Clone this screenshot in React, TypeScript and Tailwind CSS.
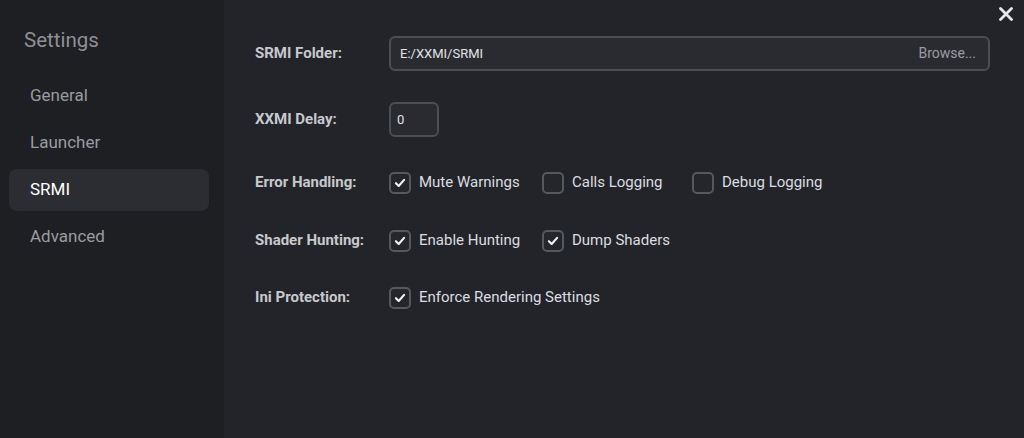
import React from 'react';

// ------------------------------------------------------------------
// Settings window — SRMI tab
// ------------------------------------------------------------------

const NAV_ITEMS = ['General', 'Launcher', 'SRMI', 'Advanced'];

function CheckMark() {
  return (
    <svg viewBox="0 0 22 22" className="h-full w-full">
      <path d="M6 11.2 L9.4 14.6 L16 7.2" fill="none" stroke="#f2f2f2" strokeWidth="2.6" strokeLinecap="round" strokeLinejoin="round" />
    </svg>
  );
}

function Checkbox({ label, checked }: { label: string; checked: boolean }) {
  return (
    <label className="flex items-center gap-[8px] cursor-pointer">
      <span className="flex h-[22px] w-[22px] items-center justify-center rounded-[5px] border-2 border-[#55585d] bg-[#25262b]">
        {checked && <CheckMark />}
      </span>
      <span className="text-[15px] text-[#dcdde0]">{label}</span>
    </label>
  );
}

function Row({ label, className = '', children }: { label: string; className?: string; children: React.ReactNode }) {
  return (
    <div className={`flex h-[35px] items-center ${className}`}>
      <div className="w-[134px] shrink-0 text-[15px] font-bold text-[#c7c9cc]">{label}</div>
      {children}
    </div>
  );
}

export default function App() {
  const active = 'SRMI';

  return (
    <div className="flex h-[438px] w-[1024px] overflow-hidden bg-[#232429]" style={{ fontFamily: 'Roboto, "Noto Sans", sans-serif' }}>
      {/* Sidebar */}
      <aside className="flex w-[224px] shrink-0 flex-col bg-[#1e1f23] px-[9px]">
        <div className="mt-[25px] pl-[15px] text-[20.5px] text-[#8d9095]">Settings</div>
        <nav className="mt-[19px] flex flex-col gap-[5px]">
          {NAV_ITEMS.map((item) => (
            <div
              key={item}
              className={`flex h-[42px] w-[200px] items-center rounded-[8px] pl-[21px] text-[17px] ${
                item === active ? 'bg-[#2c2d32] text-white' : 'text-[#9a9ca1]'
              }`}
            >
              {item}
            </div>
          ))}
        </nav>
      </aside>

      {/* Main */}
      <main className="relative flex-1 pl-[31px] pt-[36px]">
        <button type="button" className="absolute right-[11px] top-[7px] h-[14px] w-[14px]">
          <svg viewBox="0 0 14 14" className="h-full w-full">
            <path d="M1.5 1.5 L12.5 12.5 M12.5 1.5 L1.5 12.5" stroke="#e8e8e8" strokeWidth="2.8" strokeLinecap="round" />
          </svg>
        </button>

        <Row label="SRMI Folder:">
          <div className="flex h-[35px] w-[601px] items-center justify-between rounded-[6px] border-2 border-[#4b4e53] bg-[#2a2b30] pl-[9px] pr-[12px]">
            <span className="text-[13px] text-[#e2e3e5]">E:/XXMI/SRMI</span>
            <span className="text-[14px] text-[#9a9ca0]">Browse...</span>
          </div>
        </Row>

        <Row label="XXMI Delay:" className="mt-[31px]">
          <div className="flex h-[35px] w-[50px] items-center rounded-[6px] border-2 border-[#4b4e53] bg-[#2a2b30] pl-[6px]">
            <span className="text-[13px] text-[#e2e3e5]">0</span>
          </div>
        </Row>

        <Row label="Error Handling:" className="mt-[28px]">
          <div className="grid grid-cols-[153px_150px_auto]">
            <Checkbox label="Mute Warnings" checked />
            <Checkbox label="Calls Logging" checked={false} />
            <Checkbox label="Debug Logging" checked={false} />
          </div>
        </Row>

        <Row label="Shader Hunting:" className="mt-[23px]">
          <div className="grid grid-cols-[153px_150px_auto]">
            <Checkbox label="Enable Hunting" checked />
            <Checkbox label="Dump Shaders" checked />
          </div>
        </Row>

        <Row label="Ini Protection:" className="mt-[22px]">
          <Checkbox label="Enforce Rendering Settings" checked />
        </Row>
      </main>
    </div>
  );
}
